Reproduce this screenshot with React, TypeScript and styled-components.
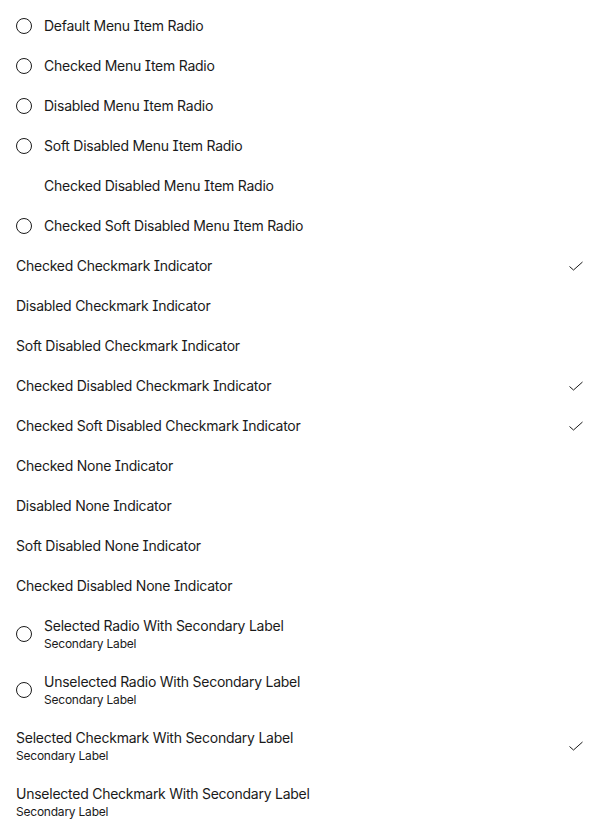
import React from "react";
import styled, { createGlobalStyle } from "styled-components";

const Global = createGlobalStyle`
  html, body { margin: 0; padding: 0; background: #fff; }
  body {
    font-family: Inter, "Noto Sans", sans-serif;
    color: #1a1a1a;
    font-feature-settings: "cv08" 1;
  }
`;

const List = styled.div`
  display: flex;
  flex-direction: column;
  gap: 4px;
  padding: 8px;
`;

const Row = styled.div`
  display: flex;
  align-items: center;
  gap: 12px;
  padding: 8px;
  min-height: 20px;
`;

const IndicatorSlot = styled.span`
  width: 16px;
  height: 16px;
  flex: none;
  display: flex;
  align-items: center;
  justify-content: center;
`;

const Circle = styled.span`
  box-sizing: border-box;
  width: 16px;
  height: 16px;
  border-radius: 50%;
  border: 1px solid #1a1a1a;
`;

const Labels = styled.div`
  flex: 1;
  display: flex;
  flex-direction: column;
  min-width: 0;
`;

const Primary = styled.span`
  font-size: 14px;
  line-height: 20px;
  letter-spacing: -0.25px;
`;

const Secondary = styled.span`
  font-size: 12px;
  line-height: 16px;
  letter-spacing: -0.22px;
`;

const CheckSlot = styled.span`
  width: 16px;
  height: 16px;
  flex: none;
  display: flex;
  align-items: center;
  justify-content: center;
`;

const Check = () => (
  <svg width="16" height="16" viewBox="0 0 16 16" fill="none">
    <path d="M1.5 8.5 L5.5 12 L14.5 4" stroke="#1a1a1a" strokeWidth="1" />
  </svg>
);

type Item = {
  label: string;
  secondary?: string;
  kind: "radio" | "radio-empty" | "check" | "none";
  checked?: boolean;
};

const items: Item[] = [
  { label: "Default Menu Item Radio", kind: "radio" },
  { label: "Checked Menu Item Radio", kind: "radio" },
  { label: "Disabled Menu Item Radio", kind: "radio" },
  { label: "Soft Disabled Menu Item Radio", kind: "radio" },
  { label: "Checked Disabled Menu Item Radio", kind: "radio-empty" },
  { label: "Checked Soft Disabled Menu Item Radio", kind: "radio" },
  { label: "Checked Checkmark Indicator", kind: "check", checked: true },
  { label: "Disabled Checkmark Indicator", kind: "check" },
  { label: "Soft Disabled Checkmark Indicator", kind: "check" },
  { label: "Checked Disabled Checkmark Indicator", kind: "check", checked: true },
  { label: "Checked Soft Disabled Checkmark Indicator", kind: "check", checked: true },
  { label: "Checked None Indicator", kind: "none" },
  { label: "Disabled None Indicator", kind: "none" },
  { label: "Soft Disabled None Indicator", kind: "none" },
  { label: "Checked Disabled None Indicator", kind: "none" },
  { label: "Selected Radio With Secondary Label", secondary: "Secondary Label", kind: "radio" },
  { label: "Unselected Radio With Secondary Label", secondary: "Secondary Label", kind: "radio" },
  { label: "Selected Checkmark With Secondary Label", secondary: "Secondary Label", kind: "check", checked: true },
  { label: "Unselected Checkmark With Secondary Label", secondary: "Secondary Label", kind: "check" },
];

export default function App() {
  return (
    <>
      <Global />
      <List>
        {items.map((it) => (
          <Row key={it.label}>
            {(it.kind === "radio" || it.kind === "radio-empty") && (
              <IndicatorSlot>{it.kind === "radio" && <Circle />}</IndicatorSlot>
            )}
            <Labels>
              <Primary>{it.label}</Primary>
              {it.secondary && <Secondary>{it.secondary}</Secondary>}
            </Labels>
            {it.kind === "check" && <CheckSlot>{it.checked && <Check />}</CheckSlot>}
          </Row>
        ))}
      </List>
    </>
  );
}
